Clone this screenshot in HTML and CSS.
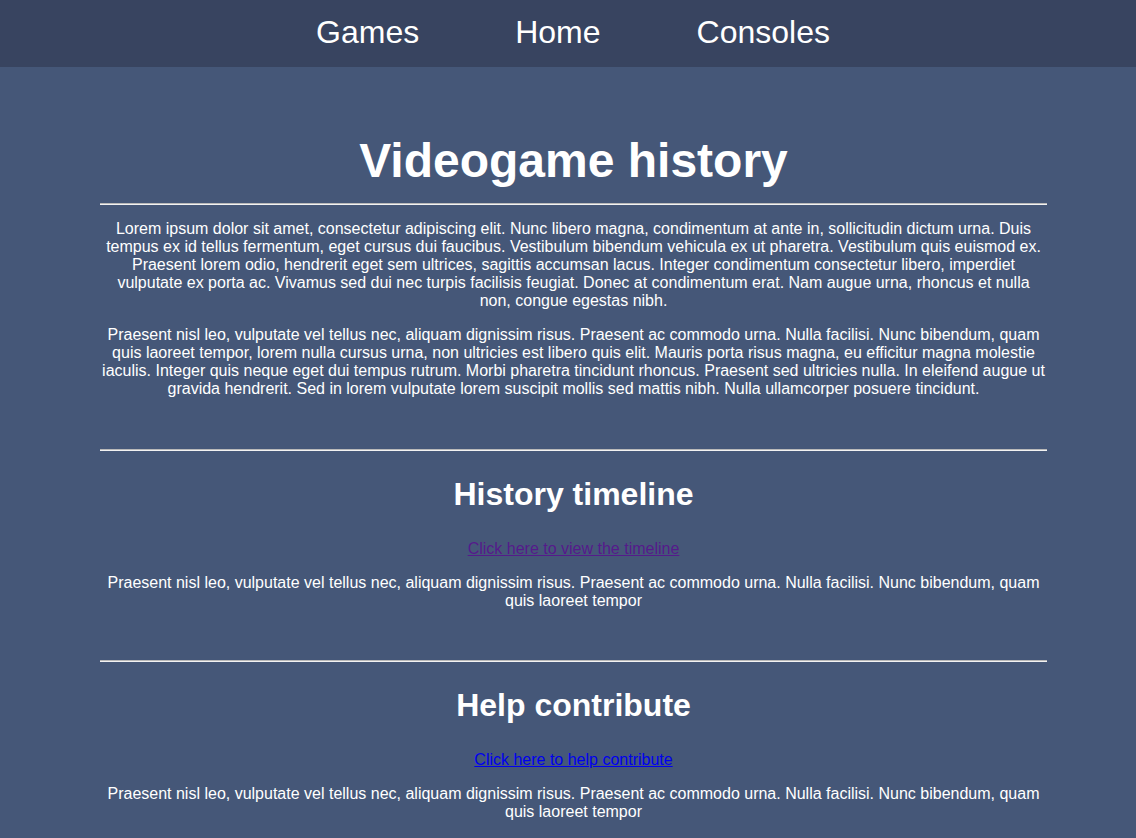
FILE: index.html
```html
<!DOCTYPE html>
<html lang="en">
<head>
<meta charset="utf-8">
<title>Videogame history</title>
<link rel="stylesheet" href="styles.css">
</head>
<body>
<nav class="topnav">
  <a class="navlink" href="#games">Games</a>
  <a class="navlink" href="#home">Home</a>
  <a class="navlink" href="#consoles">Consoles</a>
</nav>
<main class="content">
  <section class="intro">
    <h1 class="title">Videogame history</h1>
    <hr class="rule">
    <p class="text">Lorem ipsum dolor sit amet, consectetur adipiscing elit. Nunc libero magna, condimentum at ante in, sollicitudin dictum urna. Duis tempus ex id tellus fermentum, eget cursus dui faucibus. Vestibulum bibendum vehicula ex ut pharetra. Vestibulum quis euismod ex. Praesent lorem odio, hendrerit eget sem ultrices, sagittis accumsan lacus. Integer condimentum consectetur libero, imperdiet vulputate ex porta ac. Vivamus sed dui nec turpis facilisis feugiat. Donec at condimentum erat. Nam augue urna, rhoncus et nulla non, congue egestas nibh.</p>
    <p class="text">Praesent nisl leo, vulputate vel tellus nec, aliquam dignissim risus. Praesent ac commodo urna. Nulla facilisi. Nunc bibendum, quam quis laoreet tempor, lorem nulla cursus urna, non ultricies est libero quis elit. Mauris porta risus magna, eu efficitur magna molestie iaculis. Integer quis neque eget dui tempus rutrum. Morbi pharetra tincidunt rhoncus. Praesent sed ultricies nulla. In eleifend augue ut gravida hendrerit. Sed in lorem vulputate lorem suscipit mollis sed mattis nibh. Nulla ullamcorper posuere tincidunt.</p>
  </section>
  <section class="block">
    <hr class="rule">
    <h2 class="heading">History timeline</h2>
    <p class="linkline"><a class="link visited" href="#timeline">Click here to view the timeline</a></p>
    <p class="text">Praesent nisl leo, vulputate vel tellus nec, aliquam dignissim risus. Praesent ac commodo urna. Nulla facilisi. Nunc bibendum, quam quis laoreet tempor</p>
  </section>
  <section class="block">
    <hr class="rule">
    <h2 class="heading">Help contribute</h2>
    <p class="linkline"><a class="link" href="#contribute">Click here to help contribute</a></p>
    <p class="text">Praesent nisl leo, vulputate vel tellus nec, aliquam dignissim risus. Praesent ac commodo urna. Nulla facilisi. Nunc bibendum, quam quis laoreet tempor</p>
  </section>
</main>
</body>
</html>
```
FILE: styles.css
```css
html, body {
  margin: 0;
  padding: 0;
}
body {
  background: #455778;
  color: #ffffff;
  font-family: "Liberation Sans", Arial, sans-serif;
  font-size: 16px;
  min-height: 100vh;
}
.topnav {
  height: 67px;
  background: #384460;
  display: flex;
  justify-content: center;
  align-items: center;
  padding-left: 10px;
  padding-bottom: 2px;
  box-sizing: border-box;
}
.navlink {
  color: #ffffff;
  text-decoration: none;
  font-size: 32px;
  padding: 0 48px;
  line-height: 37px;
}
.content {
  margin: 0 89px 0 100px;
  text-align: center;
  padding-top: 66px;
}
.title {
  font-size: 48px;
  line-height: 55px;
  margin: 0 0 15px;
  font-weight: bold;
}
.rule {
  border: 0;
  height: 1px;
  margin: 0;
  background: #f2f2f2;
  border-top: 1px solid #b9b9b9;
}
.intro .rule {
  margin-bottom: 15px;
}
.text {
  margin: 0 0 16px;
  line-height: normal;
}
.intro {
  padding-bottom: 35px;
}
.block {
  padding-bottom: 34px;
}
.heading {
  font-size: 32px;
  line-height: 37px;
  margin: 25px 0 27px;
  font-weight: bold;
}
.linkline {
  margin: 0 0 16px;
  line-height: normal;
}
.link {
  color: #0000ee;
  text-decoration: underline;
}
.link.visited {
  color: #551a8b;
}
```
